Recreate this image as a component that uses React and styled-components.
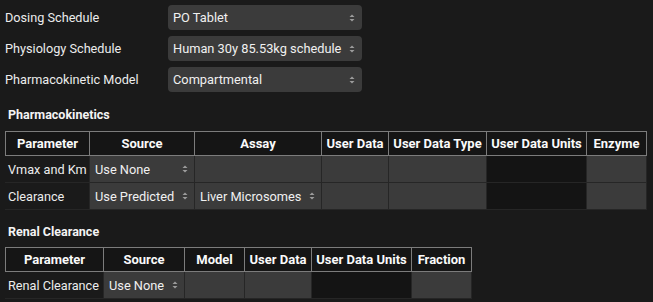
import React from "react";
import styled, { createGlobalStyle } from "styled-components";

const Global = createGlobalStyle`
  html, body { margin: 0; padding: 0; background: #1a1a1a; }
  body { font-family: Roboto, "Liberation Sans", Arial, sans-serif; color: #ececec; }
`;

const Page = styled.div`
  width: 653px;
  height: 302px;
  background: #1a1a1a;
  padding: 5px 0 0 5px;
  box-sizing: border-box;
  overflow: hidden;
`;

const Form = styled.div`
  display: grid;
  grid-template-columns: 163px 194px;
  row-gap: 6px;
  align-items: center;
`;

const Label = styled.div`
  font-size: 12.7px;
  line-height: 25px;
  color: #ececec;
`;

const Arrows = ({ className }) => (
  <svg className={className} width="6" height="10" viewBox="0 0 6 10">
    <path d="M0.5 4 L3 1.5 L5.5 4 Z" fill="#9c9c9c" />
    <path d="M0.5 6 L3 8.5 L5.5 6 Z" fill="#9c9c9c" />
  </svg>
);

const SelectBox = styled.div`
  display: flex;
  align-items: center;
  justify-content: space-between;
  height: 25px;
  background: #3b3b3b;
  border-radius: 4px;
  padding: 0 7px 0 5px;
  box-sizing: border-box;
  font-size: 12.8px;
  color: #f0f0f0;
  white-space: nowrap;
`;

const Heading = styled.div`
  font-size: 12.5px;
  font-weight: 700;
  color: #f4f4f4;
  padding-left: 3px;
  height: ${(p) => p.$h}px;
  display: flex;
  align-items: flex-end;
  padding-bottom: ${(p) => p.$pb}px;
  box-sizing: border-box;
`;

const Table = styled.table`
  border-collapse: collapse;
  table-layout: fixed;
  width: ${(p) => p.$w}px;
`;

const Th = styled.th`
  height: 24px;
  padding: 0;
  font-size: 13px;
  font-weight: 700;
  color: #fafafa;
  background: #151515;
  border: 1px solid #7c7c7c;
  text-align: center;
  white-space: nowrap;
  box-sizing: border-box;
`;

const Td = styled.td`
  height: 27px;
  padding: 0;
  font-size: 12.7px;
  color: #ececec;
  box-sizing: border-box;
  border: 1px solid #262626;
  white-space: nowrap;
  background: ${(p) =>
    p.$kind === "label" ? "#1a1a1a" : p.$kind === "dark" ? "#141414" : "#3b3b3b"};
  padding-left: ${(p) => (p.$kind === "label" ? "2px" : "0")};
  border-left-color: ${(p) => (p.$kind === "label" ? "#1a1a1a" : "#262626")};
`;

const CellSelect = styled.div`
  display: flex;
  align-items: center;
  justify-content: space-between;
  padding: 0 6px 0 5px;
  font-size: 12.8px;
  color: #f0f0f0;
`;

const Select = ({ value }) => (
  <SelectBox>
    <span>{value}</span>
    <Arrows />
  </SelectBox>
);

const InSelect = ({ value }) => (
  <CellSelect>
    <span>{value}</span>
    <Arrows />
  </CellSelect>
);

const pkCols = [84, 105, 127, 67, 98, 100, 60];
const rcCols = [98, 81, 60, 67, 100, 60];

export default function App() {
  return (
    <Page>
      <Global />
      <Form>
        <Label>Dosing Schedule</Label>
        <Select value="PO Tablet" />
        <Label>Physiology Schedule</Label>
        <Select value="Human 30y 85.53kg schedule" />
        <Label>Pharmacokinetic Model</Label>
        <Select value="Compartmental" />
      </Form>

      <Heading $h={39} $pb={9}>Pharmacokinetics</Heading>
      <Table $w={641}>
        <colgroup>
          {pkCols.map((w, i) => (
            <col key={i} style={{ width: w }} />
          ))}
        </colgroup>
        <thead>
          <tr>
            <Th>Parameter</Th>
            <Th>Source</Th>
            <Th>Assay</Th>
            <Th>User Data</Th>
            <Th>User Data Type</Th>
            <Th>User Data Units</Th>
            <Th>Enzyme</Th>
          </tr>
        </thead>
        <tbody>
          <tr>
            <Td $kind="label">Vmax and Km</Td>
            <Td><InSelect value="Use None" /></Td>
            <Td />
            <Td />
            <Td />
            <Td $kind="dark" />
            <Td />
          </tr>
          <tr>
            <Td $kind="label">Clearance</Td>
            <Td><InSelect value="Use Predicted" /></Td>
            <Td><InSelect value="Liver Microsomes" /></Td>
            <Td />
            <Td />
            <Td $kind="dark" />
            <Td />
          </tr>
        </tbody>
      </Table>

      <Heading $h={37} $pb={8}>Renal Clearance</Heading>
      <Table $w={466}>
        <colgroup>
          {rcCols.map((w, i) => (
            <col key={i} style={{ width: w }} />
          ))}
        </colgroup>
        <thead>
          <tr>
            <Th>Parameter</Th>
            <Th>Source</Th>
            <Th>Model</Th>
            <Th>User Data</Th>
            <Th>User Data Units</Th>
            <Th>Fraction</Th>
          </tr>
        </thead>
        <tbody>
          <tr>
            <Td $kind="label">Renal Clearance</Td>
            <Td><InSelect value="Use None" /></Td>
            <Td />
            <Td />
            <Td $kind="dark" />
            <Td />
          </tr>
        </tbody>
      </Table>
    </Page>
  );
}
